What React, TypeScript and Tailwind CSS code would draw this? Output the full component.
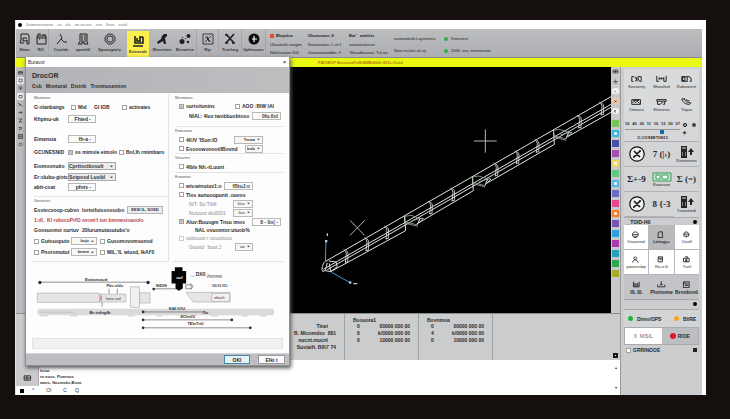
import { useId } from "react";
import type { ReactNode } from "react";
import clsx from "clsx";

const tools = [
  { label: "Slaas", width: "w-[17px]", icon: "save" },
  { label: "Rill", width: "w-[16px]", icon: "folder", line: true },
  { label: "Custide", width: "w-[24px]", icon: "bend" },
  { label: "apartitil", width: "w-[20px]", icon: "column" },
  { label: "Spooogwriy", width: "w-[33px]", icon: "ring" },
  { label: "Extrusale", width: "w-[22px]", icon: "extrude", active: true },
  { label: "Woositms", width: "w-[24px]", icon: "lever" },
  { label: "Benwrise", width: "w-[23px]", icon: "dots", line: true },
  { label: "Rip", width: "w-[22px]", icon: "frame", line: true },
  { label: "Trusfurg", width: "w-[23px]", icon: "cross", line: true },
  { label: "Ilpthoouns", width: "w-[24px]", icon: "disc", line: true },
];

const infoColumns = [
  {
    width: "w-[38px]",
    rows: ["Ulausted's magim", "Nohlnuvaos 600"],
    head: "Blupvlue",
  },
  { width: "w-[41px]", rows: ["Nausooatos-'L,uf il", "Uouoooaotobbo.  9"], head: "Uloutvuour.-9" },
  { width: "w-[45px]", rows: ["aaoouortosssv", "'Wouoblaosos, Tuf-oo"], head: "Bar'_ artefcts" },
];

const swatches = [
  "bg-[#79c257]", "bg-[#35b4dc]", "bg-[#4750a8]", "bg-[#a64bb0]",
  "bg-[#ecd768]", "bg-[#62c67c]", "bg-[#58b4e4]", "bg-[#6a6cc8]",
  "bg-[#e8468c]", "bg-[#f07c2c]", "bg-[#7554b4]", "bg-[#2f9fe0]",
  "bg-[#a83cae]", "bg-[#23a2bd]", "bg-[#2fa650]", "bg-[#a5ad2c]",
];
const litSwatches = [1, 4, 6, 9];

const shapeTools = [
  { label: "Sonsorny", d: "M1 2h3M1 2v6h2M5 3l3 2-3 3M9 2h4v6h-2l-2-3z M6 2l2 6" },
  { label: "Mnoafind", d: "M1 1v7h3M4 4h6M10 8h3V1M4 3v3M10 3v5M6 5h2" },
  { label: "Raboonirst", d: "M1 2h7v6H1zM8 2h3l2 3v3h-2M2 3h3v4H2z" },
  { label: "Dotoura", d: "M1 2h11v6H1zM2 6l2-2 2 2 2-2 3 3M3 3h7" },
  { label: "Elseorna", d: "M1 2h12v2H1zM2 4v4h3M11 4v4H9M5 8l4-3" },
  { label: "Tiapar", d: "M1 1c1 5 5 7 10 7M4 1c1 3 4 5 8 5M1 1h4M6 2l5 2M11 8l2-2" },
];

const modes = [
  { label: "Douoniad", d: "M6 2a4 4 0 1 0 .1 0M2 6h8M4 9h4" },
  { label: "Liniogy+", d: "M3 9V3l2-1h4v7M2 10h8", on: true },
  { label: "Uxufil", d: "M6 2a4 4 0 0 1 3 6H3a4 4 0 0 1 3-6M2 5h8M5 9h2" },
  { label: "poorornlop", d: "M6 2a2 2 0 1 1-.1 0M2 10c1-3 3-4 4-4s3 1 4 4" },
  { label: "Ro-o.G", d: "M3 2h6v7H3zM3 4h6M5 6h3" },
  { label: "Tiunl", d: "M2 4h8v5H2zM4 2h4v2M5 6h2v2H5z" },
];

const views = [
  { label: "IIL 0I.", d: "M2 2v7h8V2M4 4l2 2 2-2v4H4z" },
  { label: "Ploinome", d: "M6 1v5M1 6v3h10V6M4 6h4" },
  { label: "Bronbord", d: "M2 2h8v8H2zM4 2v3h5M4 7h5" },
];

function Glyph({ name }: { name: string }) {
  const line = { fill: "none", stroke: "currentColor", strokeWidth: 1 };
  return (
    <svg viewBox="0 0 12 12" className="size-3 shrink-0 text-[#202022]">
      {name === "save" && (
        <g {...line}>
          <path d="M2 7V1h7l1 2v8H8V7L6 8H4v-3h4M1 10h4M2 7l-1 3" />
        </g>
      )}
      {name === "folder" && (
        <g {...line}>
          <path d="M2 3h9v8H2zM2 5h9M3 3V1h3M8 1v2M4 6h1M9 2h2" />
        </g>
      )}
      {name === "bend" && (
        <g {...line}>
          <path d="M5 1l2 4-5 6M6 6l3 3h3" />
        </g>
      )}
      {name === "column" && (
        <g {...line}>
          <path d="M3 1h7v8l1 2H7V9H5v2H1l2-2zM5 2v7M8 2v7" />
        </g>
      )}
      {name === "ring" && (
        <g {...line}>
          <path d="M4 1h4l3 3v4l-3 3H4L1 8V4z" strokeWidth=".8" />
          <circle cx="6" cy="6" r="3" strokeWidth=".8" />
          <circle cx="6" cy="6" r="4.2" strokeWidth=".4" />
        </g>
      )}
      {name === "extrude" && (
        <g {...line} strokeWidth="1.6">
          <path d="M3 1v7h8V2M7 2h4M5 3v3h3M1 11h10" />
          <path d="M8 2v5" />
        </g>
      )}
      {name === "lever" && (
        <g fill="currentColor">
          <path d="M8 1h3v2L9 5l1 6H8L7 8l-5 3-1-2 4-3 1-3z" />
        </g>
      )}
      {name === "dots" && (
        <g fill="currentColor">
          <circle cx="3" cy="8.500" r="2.500" />
          <circle cx="9.500" cy="3" r="2" />
          <circle cx="9" cy="9" r="1.200" />
          <path d="M3 4l1 1M6 6l1-1" stroke="currentColor" />
        </g>
      )}
      {name === "frame" && (
        <g {...line} strokeWidth=".8">
          <path d="M1 1h10v10H1zM3 4l3 2 3-3M3 9l3-3 3 3M5 3l2 6" />
        </g>
      )}
      {name === "cross" && (
        <g {...line} strokeWidth="1.700">
          <path d="M2 1l8 9M10 1L2 10M1 10h3M8 10h3M1 2h3" />
        </g>
      )}
      {name === "disc" && (
        <g>
          <circle cx="6" cy="6" r="5.500" fill="#0d0d0e" />
          <path d="M6 3v3h3M4 6h2v3" fill="none" stroke="#fff" strokeWidth="1.200" />
        </g>
      )}
    </svg>
  );
}

function Stroke({ d, className = "h-2 w-3" }: { d: string; className?: string }) {
  return (
    <svg viewBox="0 0 14 10" className={clsx("shrink-0", className)}>
      <path d={d} fill="none" stroke="#1d1d1f" strokeWidth="1.2" />
    </svg>
  );
}

function Check({ children, className, faint, checked }: { children: ReactNode; className?: string; faint?: boolean; checked?: boolean }) {
  return (
    <label className={clsx("flex items-center gap-0.5 whitespace-nowrap", faint && "font-normal text-[#8d8d8d]", className)}>
      <input
        type="checkbox"
        defaultChecked={checked}
        className={clsx("size-[5px] shrink-0 appearance-none border bg-white checked:bg-[#c4c4c4]", faint ? "border-[#cfcfcf]" : "border-[#a3a3a3]")}
      />
      {children}
    </label>
  );
}

function Drop({ label, value, className }: { label: string; value: string; className?: string }) {
  return (
    <span className={clsx("flex h-2 shrink-0 items-center border border-[#b8b8b8] bg-[#f7f7f6]", className)}>
      <select aria-label={label} className="h-[6px] min-w-0 flex-1 appearance-none bg-transparent pl-px text-right text-[4px] leading-[6px] text-[#333] outline-none">
        <option>{value}</option>
      </select>
      <svg viewBox="0 0 4 4" className="mx-0.5 size-[3px] shrink-0">
        <path d="M0 1h4L2 3z" fill="#444" />
      </svg>
    </span>
  );
}

function Field({ label, value, className }: { label: string; value: string; className?: string }) {
  return (
    <input
      aria-label={label}
      defaultValue={value}
      className={clsx("h-2 shrink-0 border border-[#b8b8b8] bg-[#fbfbfa] px-0.5 text-right text-[5px] leading-[6px] text-[#444] outline-none", className)}
    />
  );
}

function FieldRow({ label, value, wide, className }: { label: string; value: string; wide?: boolean; className?: string }) {
  const id = useId();
  return (
    <div className={clsx("flex h-2.5 items-center", className)}>
      <label htmlFor={id} className="w-[34px] shrink-0 whitespace-nowrap">{label}</label>
      {wide ? (
        <span className="flex h-2 w-12 items-center border border-[#a9a9a9] bg-[#ececeb]">
          <select id={id} className="h-[6px] min-w-0 flex-1 appearance-none bg-transparent text-[5px] leading-[6px] font-bold outline-none">
            <option>{value}</option>
          </select>
          <svg viewBox="0 0 4 4" className="mr-0.5 size-[3px]">
            <path d="M0 1h4L2 3z" fill="#333" />
          </svg>
        </span>
      ) : (
        <input id={id} defaultValue={value} className="h-2 w-7 border border-[#b8b8b8] bg-[#fafafa] pr-1 text-right text-[5px] leading-[6px] outline-none" />
      )}
    </div>
  );
}

function Heading({ children }: { children: ReactNode }) {
  return <h3 className="h-2 text-[4px] leading-[8px] font-normal text-[#555]">{children}</h3>;
}

function TitleBar() {
  return (
    <div className="flex h-[9px] shrink-0 items-center gap-1 bg-white pl-0.5 text-[4px] text-[#777]">
      <span className="size-1 rounded-full bg-black" />
      <span>Sattmnevtoorre</span>
      <span>us</span>
      <span>als</span>
      <span>on oo aur</span>
      <span>sstr</span>
      <span>flvae</span>
      <span>nutul</span>
    </div>
  );
}

function Ribbon() {
  return (
    <header className="flex h-[29px] shrink-0 border-b border-[#88898b] bg-linear-to-b from-[#bcbdbf] to-[#adaeb1]">
      <nav className="flex">
        {tools.map((tool) => (
          <button
            key={tool.label}
            className={clsx(
              "flex flex-col items-center gap-0.5 pt-1",
              tool.width,
              tool.active && "mx-px mt-0.5 bg-[#fbef4d] pt-0.5",
              tool.line && "border-r border-[#a4a5a8]",
            )}
          >
            <Glyph name={tool.icon} />
            <span className="text-[4px] leading-[6px] font-bold text-[#38383a]">{tool.label}</span>
          </button>
        ))}
      </nav>
      <div className="flex pl-1 text-[4px] leading-[6px] whitespace-nowrap text-[#232325]">
        {infoColumns.map((column, i) => (
          <div key={column.head} className={clsx("flex flex-col justify-between pt-1 pb-px", column.width)}>
            <span className="flex items-center gap-0.5 font-bold">
              {i === 0 && <i className="size-1 bg-[#e8482c]" />}
              {column.head}
            </span>
            {column.rows.map((row) => (
              <span key={row}>{row}</span>
            ))}
          </div>
        ))}
        <div className="flex w-[50px] flex-col gap-1.5 pt-[7px]">
          <span>oamoodistb-Loyistnenu</span>
          <span>Nosi nivukvi uk nij</span>
        </div>
        <div className="flex flex-col gap-1.5 pt-[7px]">
          {["Dninnorst", "2066, vus, minutiesion"].map((text) => (
            <span key={text} className="flex items-center gap-[3px]">
              <i className="size-1 rounded-full bg-[#2dae46]" />
              {text}
            </span>
          ))}
        </div>
      </div>
    </header>
  );
}

function SideStrip() {
  const marks = ["M3 3h8v5H3zM3 5h8", "M4 2h6v6H4z", "M7 1a3 3 0 1 0 .1 0M7 3v3", "M4 3h6v5H4z", "M2 2l9 6M3 8l4-4", "M3 5h7M7 2l3 3-3 3", "M3 2h7L4 8h7", "M3 3h6v3H5v3", "M3 1h8v8H3zM4 4h6M4 6h6", "M7 2a3 3 0 1 0 .1 0"];
  return (
    <nav className="flex w-[9px] shrink-0 flex-col items-center gap-px bg-[#bbbcbf] pt-0.5">
      {marks.map((d, i) => (
        <button key={i} aria-label={`Snap ${i + 1}`} className={clsx("flex h-[7px] items-center", (i === 1 || i === 3) && "bg-[#eeeeee]")}>
          <Stroke d={d} className="h-[5px] w-[7px]" />
        </button>
      ))}
    </nav>
  );
}

const ribs = [170, 232, 292, 423, 490, 620, 683, 743, 870, 937];
const notches = [345, 548, 791];

function Viewport() {
  const top = (x: number) => Math.round(515 - 0.577 * (x - 105));
  return (
    <svg viewBox="-3 -69 966 738" preserveAspectRatio="xMaxYMin meet" className="h-full min-w-0 flex-1 bg-black">
      <g fill="none" stroke="#e2e2e2" strokeWidth="3">
        <path d="M105 515L963 20M100 538L963 43M112 539L963 52" />
        <path d="M122 545L347 422L343 378M380 402L550 302L547 260M590 280L793 163L790 119M833 140L963 67" />
        <path d="M105 515C97 522 94 538 98 544L106 542L112 518M106 542L122 545L142 530L138 516L116 513M122 545L118 520" />
        {ribs.map((x) => (
          <path
            key={x}
            d={`M${x - 9} ${top(x) + 1}q7 4 8 13l-3 27M${x - 3} ${top(x) + 3}q8 5 7 13l-1 23h-8`}
            strokeWidth="2.500"
          />
        ))}
      </g>
      <g fill="none" stroke="#91ad91" strokeWidth="2.500">
        {notches.map((x) => {
          const y = top(x);
          return (
            <path key={x} d={`M${x} ${y + 2}l18-3 27 9-8 20-36-10zm0 20l38 10M${x + 20} ${y + 16}l25-8`} />
          );
        })}
      </g>
      <g fill="none" stroke="#e0e0e0" strokeWidth="2.500">
        {notches.map((x) => (
          <path key={x} d={`M${x + 37} ${top(x) + 27}l8-19h10l-14 14`} />
        ))}
      </g>
      <path d="M552 153h68M586 118v70M180 391l44 45M224 391l-44 45" stroke="#b4b4b4" strokeWidth="3" />
      <path d="M106 515l2-62M125 547l55 31" stroke="#5593cb" strokeWidth="3" />
      <path d="M105 450h7v7h-7zM177 574h7v7h-7zM110 430h4v8h-4zM190 579h12v4h-12z" fill="#a6d1f2" />
    </svg>
  );
}

function Palette() {
  const marks = ["M2 2h10v6H2zM2 5h10M7 2v6", "M7 1v3M2 5h10M4 8h6", "M5 3l3 4", "M5 3l4 3M9 3L5 7", "M8 3H5v3h3"];
  return (
    <nav className="flex w-[9px] shrink-0 flex-col items-center bg-[#c9cacc] pt-px">
      {marks.map((d, i) => (
        <button key={d} aria-label={`Layer tool ${i + 1}`} className={clsx("mb-1 flex h-1.5 w-[7px] items-center justify-center", i > 1 && "rounded-full", i === 3 ? "bg-[#f3c9a0]" : i > 1 && "bg-[#f3f3f3]")}>
          <Stroke d={d} className="h-[5px] w-[7px]" />
        </button>
      ))}
      <div className="flex flex-col gap-[3px] pt-0.5">
        {swatches.map((color, i) => (
          <button key={i} aria-label={`Layer colour ${i + 1}`} className={clsx("flex size-[7px] items-center justify-center", color)}>
            {litSwatches.includes(i) && <i className="size-[3px] bg-white/80" />}
          </button>
        ))}
      </div>
    </nav>
  );
}

function Status() {
  const rows = ["00000 000 00", "k/0000 000 00", "10000 000 00"];
  return (
    <div className="flex h-[47px] shrink-0 border-t border-[#8b8c8e] bg-[#caccce] text-[5px] leading-[7px] font-bold text-[#2b2b2d]">
      <div className="flex w-[329px] flex-col items-end border-r border-[#a2a3a5] pt-[9px] pr-2 whitespace-pre">
        <span className="pr-2">Tinei</span>
        <span>B. Micomdss  881</span>
        <span className="pr-2">nucnt.mucnl</span>
        <span>Sustaift. B0U' 74</span>
      </div>
      {["Boouota1", "Bovnmoa"].map((title) => (
        <div key={title} className="w-[74px] border-r border-[#a2a3a5] px-2 pt-[3px]">
          <table className="w-full">
            <caption className="text-left leading-[6px]">{title}</caption>
            <tbody>
              {rows.map((row, i) => (
                <tr key={row}>
                  <td className="pl-1">{title === "Bovnmoa" && i === 1 ? "4" : "0"}</td>
                  <td className="text-right">{row}</td>
                </tr>
              ))}
            </tbody>
          </table>
        </div>
      ))}
      <div className="flex flex-1 items-end justify-end pr-0.5 pb-0.5">
        <button aria-label="Collapse status" className="flex size-[5px] items-center justify-center bg-[#151515]">
          <i className="size-px bg-white" />
        </button>
      </div>
    </div>
  );
}

function Log() {
  return (
    <div className="flex h-[35px] shrink-0 bg-white text-[5px] leading-[7px] text-[#333]">
      <div className="flex flex-1 flex-col">
        <div className="flex flex-1">
          <div className="flex w-[23px] items-end justify-center border-r border-[#aaa] bg-[#c9cacc] pb-1">
            <Stroke d="M3 2h9v6H3zM7 2v6M3 5h9" className="h-2 w-2.5" />
          </div>
          <div className="flex flex-col justify-end pl-px text-[4px] leading-[6px] font-bold">
            <span>Iotsa</span>
            <span>ro nous, Piomnos</span>
            <span>wwrc, Nocmobs,Buvo</span>
          </div>
        </div>
        <div className="flex h-[9px] items-center gap-2 pl-1">
          <i className="size-1 bg-black" />
          <span>^</span>
          <span className="pl-1">Ol</span>
          <span className="pl-1">C</span>
          <span>Q</span>
        </div>
      </div>
      <div className="flex w-2 flex-col items-center justify-between py-1 text-[4px]">
        <span>▴</span>
        <span>▾</span>
      </div>
    </div>
  );
}

function Formula({ children, label, icon }: { children?: ReactNode; label?: string; icon?: ReactNode }) {
  return (
    <button className="flex h-full flex-col items-center justify-center">
      {icon}
      {children && <span className="font-['Liberation_Serif',serif] text-[9px] leading-[12px] font-bold whitespace-nowrap">{children}</span>}
      {label && <span className="text-[4px] leading-[5px]">{label}</span>}
    </button>
  );
}

function CircleX() {
  return (
    <svg viewBox="0 0 16 16" className="size-4">
      <circle cx="8" cy="8" r="7.200" fill="#eee" stroke="#111" strokeWidth="1.200" />
      <path d="M5 5l6 6M11 5l-6 6M4 11h2M10 5h2" stroke="#111" strokeWidth="1.600" />
    </svg>
  );
}

function Machine() {
  return (
    <svg viewBox="0 0 14 12" className="h-3 w-3.5">
      <path d="M1 0h6v12H1z" fill="#252527" />
      <path d="M2 2h4M2 7h1M5 7h1M2 9h1M5 9h1" stroke="#ddd" />
      <path d="M11 2l3 4h-2v3h-2V6H8z" fill="#252527" />
    </svg>
  );
}

function Panel() {
  return (
    <aside className="flex w-[82px] shrink-0 flex-col border-l border-[#97989a] bg-[#cccdcf] px-[3px] pt-0.5 text-[5px] leading-[6px] text-[#29292b]">
      <div className="grid grid-cols-3 bg-[#d9dadb] pt-1.5">
        {shapeTools.map((tool) => (
          <button key={tool.label} className="flex h-[23px] flex-col items-center">
            <Stroke d={tool.d} className="h-2 w-[11px]" />
            <span className="mt-px text-[4px] leading-[5px]">{tool.label}</span>
          </button>
        ))}
      </div>
      <div className="flex h-[20px] bg-[#d6d7d8] pl-px">
        <div className="flex w-[55px] flex-col">
          <div className="flex justify-between text-[4px] leading-[6px] font-bold">
            {["10", "40", "20", "11", "10", "13", "00", "07"].map((n, i) => <span key={i}>{n}</span>)}
          </div>
          <input
            type="range"
            aria-label="Scale"
            defaultValue="69"
            className="my-0.5 h-1 w-full appearance-none border-t border-[#999] bg-transparent [&::-webkit-slider-thumb]:h-1 [&::-webkit-slider-thumb]:w-1 [&::-webkit-slider-thumb]:appearance-none [&::-webkit-slider-thumb]:bg-[#17689f]"
          />
          <span className="text-center text-[4px] leading-[6px] font-bold">O-COSEET0N13</span>
        </div>
        <div className="grid flex-1 grid-cols-2 place-items-center pb-1">
          <i className="size-1 rounded-full border border-black" />
          <i className="size-1 rounded-full bg-[#444]" />
          <span className="text-[6px] font-bold">✦</span>
        </div>
      </div>
      <div className="grid grid-cols-3 grid-rows-[25px_25px_25px] divide-y divide-[#b2b3b6] border-t border-[#aaabae] bg-[#d3d4d5]">
        <Formula icon={<CircleX />} />
        <Formula>7 (|›)</Formula>
        <Formula icon={<Machine />} label="Ranntosors" />
        <Formula>Σ+-9</Formula>
        <Formula
          icon={
            <svg viewBox="0 0 20 10" className="h-2.5 w-5">
              <path d="M1 1h18v8H1z" fill="#c4e7c7" stroke="#37995a" />
              <path d="M4 3h4v4H4zM10 3h6v4h-6z" fill="#f6fff6" stroke="#37995a" />
            </svg>
          }
          label="Raooraoe"
        />
        <Formula>Σ (=)</Formula>
        <Formula icon={<CircleX />} />
        <Formula>8 {"{"}-3</Formula>
        <Formula icon={<Machine />} label="Tusonitorib" />
      </div>
      <div className="flex h-2 items-center justify-between border-t border-[#aaabae] px-0.5 font-bold">
        <span>_ TOID-I40</span>
        <i className="size-1 rounded-full bg-black" />
      </div>
      <div className="grid grid-cols-3 gap-px bg-[#b6b7b9] pb-px">
        {modes.map((mode) => (
          <button key={mode.label} className={clsx("flex h-6 flex-col items-center justify-center gap-px", mode.on ? "bg-[#b9babc]" : "bg-white")}>
            <Stroke d={mode.d} className="h-2 w-2.5" />
            <span className={clsx("text-[4px] leading-[6px]", mode.on && "font-bold")}>{mode.label}</span>
          </button>
        ))}
      </div>
      <div className="grid h-[25px] grid-cols-3 border-b border-[#a5a6a8] bg-[#c3c4c7]">
        {views.map((view) => (
          <button key={view.label} className="flex flex-col items-center justify-center gap-px">
            <Stroke d={view.d} className="h-2 w-2.5" />
            <span className="text-[5px] leading-[6px] font-bold">{view.label}</span>
          </button>
        ))}
      </div>
      <div className="flex h-2 items-center justify-end px-0.5">
        <i className="size-1 rounded-full bg-black" />
      </div>
      <div className="mt-px grid h-[18px] grid-cols-[46px_1fr] items-center border-t border-[#a9aaac] bg-[#d3d4d5] pl-1 font-bold">
        <span className="flex items-center gap-1"><i className="size-[5px] rounded-full bg-[#24b437]" />Dimo/OPS</span>
        <span className="flex items-center gap-1"><i className="size-[5px] rounded-full bg-[#f2a51f]" />BIIRE</span>
      </div>
      <div className="grid h-[18px] grid-cols-2 border border-[#aaabad]">
        <button className="bg-white text-[#666]">X&nbsp; MISIL</button>
        <button className="flex items-center justify-center gap-0.5 bg-[#bdbec1] font-bold">
          <i className="size-1.5 rounded-full bg-[#e01920]" />RIOE
        </button>
      </div>
      <div className="flex h-2.5 items-center justify-between px-0.5 font-bold">
        <Check>GRRINOOE</Check>
        <i className="size-1 bg-[#222]" />
      </div>
    </aside>
  );
}

function ProfileDiagram() {
  return (
    <svg viewBox="72 -9 795 231" className="w-full" fontFamily="Liberation Sans, sans-serif" fontSize="15" fontWeight="700" fill="#333">
      <g stroke="#adadad" strokeWidth="2" fill="#e6e6e6">
        <path d="M106 85h188v28H106zM294 88h80v24h-80zM416 84h31v31h-31zM556 85l22 27h111V83H556" />
        <path d="M388 66h27v62h-27zM633 86h54v24h-54z" fill="#f1f1f1" />
      </g>
      <path d="M107 132h714v20h-22v4h-20v-4h-34v4h-22v-4h-70v4h-22v-4H484v4h-18v-4h-64v4h-22v-4H228v4h-24v-4h-66v4h-24v-4h-7z" fill="#dadada" />
      <path d="M116 143h100" stroke="#bbb" strokeWidth="2" />
      <g stroke="#5a5a5a" strokeWidth="2" fill="none">
        <path d="M110 52h335M424 142h190M424 166h274M424 190h330M458 72h70M302 112v14M323 72v14M348 72v14" />
        <path d="M570 34h14M618 38h42" stroke="#aaa" />
        <path d="M555 60h16v12h-16zM569 56l8 8-6 10" />
      </g>
      <path d="M299 92v16" stroke="#d94a3c" strokeWidth="3" />
      <path d="M522 7h23v11h11v38h-10v15l-12 7-10-7V56h-12V18h10z" fill="#050505" />
      <g fill="#2c2c2c">
        <circle cx="114" cy="53" r="5" />
        <circle cx="441" cy="53" r="5" />
        <circle cx="426" cy="142" r="4" />
        <circle cx="426" cy="166" r="4" />
        <circle cx="426" cy="190" r="4" />
        <circle cx="694" cy="166" r="4" />
        <circle cx="750" cy="190" r="4" />
        <circle cx="458" cy="73" r="4" />
      </g>
      <text x="250" y="48" fontSize="13">Exttomoud</text>
      <text x="315" y="66" fontSize="12">Pku oldu</text>
      <text x="313" y="105" fontSize="13" fontWeight="400">Iotio ool</text>
      <text x="264" y="147" fontSize="13">Br:tnfngfb</text>
      <text x="464" y="67" fontSize="13">SIDIS</text>
      <text x="526" y="42" fontSize="13" fill="#fff">uul</text>
      <text x="585" y="32">DXII</text>
      <text x="618" y="36" fontSize="12" fontWeight="400">Jtornoog</text>
      <text x="634" y="67" fontSize="13">OI:O IO:</text>
      <text x="640" y="103" fontSize="13" fontWeight="400">ofosIt</text>
      <text x="503" y="137" fontSize="13">SI4I IOU</text>
      <text x="606" y="147" fontSize="12">Oo</text>
      <text x="539" y="161" fontSize="12">EOImfU</text>
      <text x="560" y="183" fontSize="12">TEIoTnU</text>
    </svg>
  );
}

function ProfileDialog() {
  return (
    <section role="dialog" aria-label="Extrude" className="absolute top-[37px] left-[9px] w-[265px] border-x border-b border-[#8f9092] bg-[#fdfdfd] text-[5px] leading-[6px] text-[#2e2e30] shadow-[1px_2px_4px_#555]">
      <div className="flex h-2.5 items-center justify-between bg-white px-0.5">
        <span>Butavol</span>
        <button aria-label="Close" className="pr-px font-bold">×</button>
      </div>
      <div className="h-[26px] bg-linear-to-r from-[#b2b3b6] to-[#bdbec0] px-1.5 pt-1">
        <h2 className="text-[7px] leading-[10px] font-bold">DrocOR</h2>
        <nav className="flex gap-1 text-[5px] leading-[10px] font-bold">
          <button>Gsb</button>
          <button>Montural</button>
          <button>Distnb</button>
          <button>Tronmusemion</button>
        </nav>
      </div>
      <div className="grid grid-cols-[137px_1fr] gap-1 px-1.5 pt-px font-bold">
        <div className="border-r border-b border-[#e3e3e3] pb-1 pl-0.5 whitespace-nowrap">
          <Heading>Blumnios</Heading>
          <div className="flex h-2.5 items-center">
            <span className="w-[37px]">G:olanbangs</span>
            <Check className="w-[23px]">Mid</Check>
            <span className="w-[28px]">GI IOB</span>
            <Check>activates</Check>
          </div>
          <FieldRow className="mt-0.5" label="Kfipinu-uk" value="Fhied -" />
          <FieldRow className="mt-2.5" label="Eimensia" value="fh-a -" />
          <div className="mt-[3px] flex h-2.5 items-center">
            <span className="w-[34px]">GCUNESNID</span>
            <Check checked className="w-[51px]">os mimsle eimolo</Check>
            <Check>Bol,Ih rmimbaro</Check>
          </div>
          <FieldRow className="mt-1" wide label="Eiomoonutio" value="Cprttoctbosult" />
          <FieldRow className="mt-px" wide label="Er:slubu-giots" value="Sotposd Lusibl" />
          <FieldRow label="abtt-coat" value="pfots -" />
          <div className="mt-1 border-t border-[#e3e3e3]">
            <Heading>Senvices</Heading>
            <div className="flex h-2.5 items-center">
              <span className="w-12">Eostocvoop-cubvo</span>
              <span className="w-[45px]">Iortoifuisoossobo</span>
              <button className="h-2 w-9 border border-[#b5b5b5] bg-[#ececec] text-[4px] font-bold">EESI IL, SOSD</button>
            </div>
            <p className="h-2.5 leading-[10px] text-[#b94345]">1:dl,&nbsp; Kl rvbscoPrfO ovom't ion bmowsioaoolo</p>
            <div className="flex h-2.5 items-center">
              <span className="w-12">Goosuomst ourtuv</span>
              <span>20Iurumutasutubs'o</span>
            </div>
            <div className="mt-px flex h-2.5 items-center">
              <Check className="w-[37px]">Gutouoputo</Check>
              <Drop label="Gutouoputo" value="bojo" className="w-[26px]" />
              <Check className="ml-[3px]">Gusomovomsunod</Check>
            </div>
            <div className="mt-px flex h-2.5 items-center">
              <Check className="w-[37px]">Pnoromutut</Check>
              <Drop label="Pnoromutut" value="bvwm" className="w-[26px]" />
              <Check className="ml-[3px]">MIL,'IL wiusd, IkAf'0</Check>
            </div>
          </div>
        </div>
        <div className="border-b border-[#e3e3e3] pl-0.5 whitespace-nowrap">
          <Heading>Munmons</Heading>
          <div className="flex h-2 items-center pl-1">
            <Check checked className="w-[56px]">surtoitunins</Check>
            <Check>AOO :BIW IAI</Check>
          </div>
          <div className="flex h-3 items-center justify-between pr-0.5 pl-3.5">
            <span>NIAI.: 4luv twobbuobtoso</span>
            <Field label="Offset" value="0fu.6oI" className="w-[29px]" />
          </div>
          <div className="mt-1 border-t border-[#e3e3e3] pr-5 pl-1">
            <div className="-ml-1"><Heading>Romanoe</Heading></div>
            <div className="flex h-[9px] items-center justify-between">
              <Check>4IUV 'ISun:IO</Check>
              <Drop label="Start" value="Tmwa" className="w-[29px]" />
            </div>
            <div className="flex h-[9px] items-center justify-between">
              <Check>Eoooowonoot/IBovnd</Check>
              <Drop label="End" value="bulo" className="w-[18px]" />
            </div>
          </div>
          <div className="border-t border-[#e3e3e3] pl-1">
            <div className="-ml-1"><Heading>Vtuurms</Heading></div>
            <Check className="h-[9px]">4Iblv Nh.-tLuunt</Check>
          </div>
          <div className="mt-px border-t border-[#e3e3e3] pl-1">
            <div className="-ml-1"><Heading>Eunsnoe</Heading></div>
            <div className="flex h-[9px] items-center justify-between pr-[30px]">
              <Check>wiv.winutuv1:o</Check>
              <Field label="Width" value="fBtuJ:o" className="w-[29px]" />
            </div>
            <Check className="h-[9px]">Tlos aunuoupunti .ouvos</Check>
            <div className="flex h-[9px] items-center justify-between pr-[30px] pl-2.5 font-normal text-[#888]">
              <span>NIT. Su:TIblf</span>
              <Drop label="Strip" value="6tuv" className="w-5" />
            </div>
            <div className="flex h-[9px] items-center justify-between pr-[30px] pl-2.5 font-normal text-[#888]">
              <span>Nutuunt diu0001</span>
              <Drop label="Part" value="6os" className="w-5" />
            </div>
            <div className="flex h-[9px] items-center justify-between pr-0.5">
              <Check checked>Aluv:Buusgm Tnsu imos</Check>
              <Field label="Range" value="8 - 0o( -" className="w-[29px]" />
            </div>
            <p className="h-2 pl-4 leading-[8px]">NAL ovuomtor:utuob%</p>
            <Check faint className="h-2">uobtuuot r:uuutotuus</Check>
            <div className="flex h-[9px] items-center justify-between pr-[30px] pl-2.5 font-normal text-[#888]">
              <span>Gtuotd&nbsp; 'buut:J</span>
              <Drop label="Depth" value="ow" className="w-[18px]" />
            </div>
          </div>
        </div>
      </div>
      <ProfileDiagram />
      <div className="mx-1.5 mb-1 h-[11px] border border-[#e4e4e4] bg-[#f1f1f1]" />
      <footer className="flex h-3 items-center justify-end gap-2 border-t border-[#d6d6d6] bg-[#bcbec1] pr-1">
        <button className="h-[9px] w-[26px] border border-[#4585aa] bg-[#e2f2fb] font-bold">OKI</button>
        <button className="h-[9px] w-[27px] border border-[#9a9a9a] bg-[#fafafa] font-bold">Elki t</button>
      </footer>
    </section>
  );
}

export default function App() {
  return (
    <div className="flex h-screen bg-[#150f0d] pt-5 pr-6 pb-6 pl-[15px] font-['Liberation_Sans',sans-serif]">
      <div className="relative flex min-w-0 flex-1 flex-col border-l border-[#e4e4e4] bg-white pr-1">
        <TitleBar />
        <Ribbon />
        <div className="h-[9px] shrink-0 bg-[#e9f912] pl-[302px] text-[4px] leading-[9px] font-bold text-[#b97908]">
          FIBOBOF BmuvtutFoMtBMBt80tIt:001L:Ootd
        </div>
        <div className="flex min-h-0 flex-1">
          <main className="flex min-w-0 flex-1 flex-col">
            <div className="flex min-h-0 flex-1">
              <SideStrip />
              <Viewport />
              <Palette />
            </div>
            <Status />
            <Log />
          </main>
          <Panel />
        </div>
        <ProfileDialog />
      </div>
    </div>
  );
}
